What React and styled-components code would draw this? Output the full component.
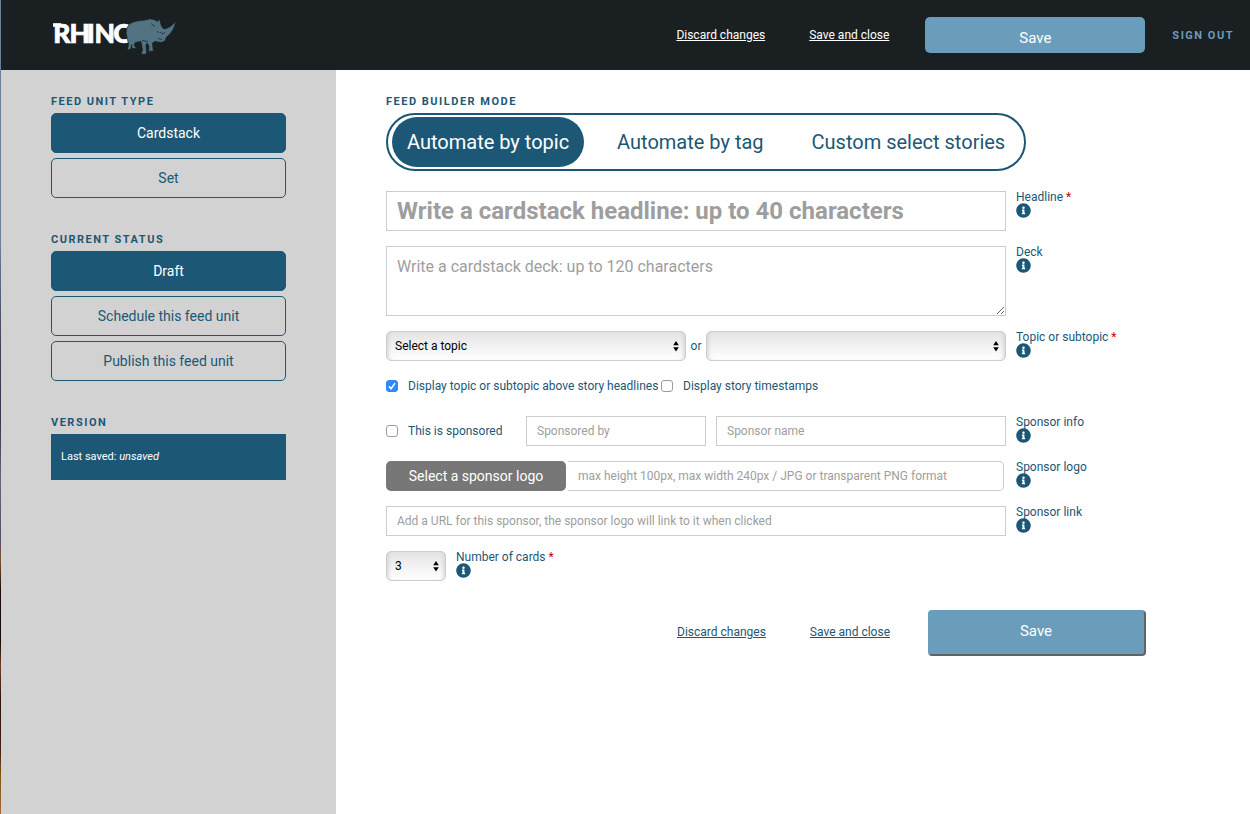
import React from 'react';
import styled, { createGlobalStyle, css } from 'styled-components';
import { FaInfoCircle } from 'react-icons/fa';

const blue = '#1c5775';
const sky = '#6a9dbc';

const GlobalStyle = createGlobalStyle`
  *, *::before, *::after { box-sizing: border-box; }
  body { margin: 0; background: #fff; color: ${blue}; font: 12px/15px Roboto, sans-serif; }
  button, input, select, textarea { font-family: inherit; margin: 0; }
`;

const Page = styled.div`
  display: flex;
  flex-direction: column;
  height: 814px;
  border-left: 1px solid;
  border-image: linear-gradient(
    #6d8299 0, #6d8299 240px, #56657f 290px, #3f4257 350px, #34374e 420px, #6a6578 480px,
    #55506a 535px, #7a5230 560px, #1d0d08 590px, #140805 640px, #713d27 665px, #2b120c 700px,
    #45211a 750px, #7d5a10 775px, #96602f 800px, #a8663c 814px) 1;
`;

const Header = styled.header`
  display: flex;
  align-items: center;
  flex: none;
  height: 70px;
  padding: 0 16px 0 50px;
  background: #1a1f22;
`;

const Logo = styled.svg`
  display: block;
  width: 130px;
  height: 50px;
  margin-right: auto;
`;

const ActionLink = styled.a`
  color: ${p => (p.$light ? '#fff' : blue)};
  text-decoration: underline;
  font-size: 12px;
  line-height: 15px;
  white-space: nowrap;
  margin-right: ${p => p.$gap}px;
`;

const SaveButton = styled.button`
  background: ${sky};
  color: #fff;
  font-size: 15px;
  border-radius: 5px;
  ${p => p.$raised
    ? css`width: 218px; height: 46px; border: 2px solid; border-color: ${sky} #5f6468 #5f6468 ${sky}; border-radius: 4px; padding: 0 2px 4px 0;`
    : css`width: 220px; height: 36px; border: 0; padding: 5px 0 0; `}
`;

const SignOut = styled.a`
  margin-left: 27px;
  color: ${sky};
  font-size: 11px;
  font-weight: 700;
  letter-spacing: 1.5px;
  white-space: nowrap;
`;

const Body = styled.div`
  display: flex;
  flex: 1;
`;

const Sidebar = styled.aside`
  width: 335px;
  padding: 24px 50px 0;
  background: #d2d2d2;
`;

const Group = styled.section`
  margin-bottom: 34px;
`;

const Heading = styled.h2`
  margin: 0 0 4px;
  font-size: 11px;
  line-height: 15px;
  font-weight: 700;
  letter-spacing: 1.5px;
`;

const Choice = styled.button`
  display: block;
  width: 235px;
  height: 40px;
  margin-bottom: 5px;
  padding: 0;
  border: 1px solid ${blue};
  border-radius: 5px;
  background: ${p => (p.$active ? blue : 'transparent')};
  color: ${p => (p.$active ? '#fff' : blue)};
  font-size: 14px;
`;

const Version = styled.div`
  height: 46px;
  padding: 15px 10px;
  background: ${blue};
  color: #fff;
  font-size: 11px;
`;

const Main = styled.main`
  width: 914px;
  padding: 24px 50px 0;
`;

const Modes = styled.div`
  display: flex;
  width: 640px;
  height: 58px;
  margin-bottom: 20px;
  padding: 2px 4px;
  border: 2px solid ${blue};
  border-radius: 29px;
`;

const Mode = styled.button`
  height: 50px;
  padding: 0 15px;
  margin-right: ${p => p.$gap || 0}px;
  border: 0;
  border-radius: 25px;
  background: ${p => (p.$active ? blue : 'transparent')};
  color: ${p => (p.$active ? '#fff' : blue)};
  font-size: 20px;
  white-space: nowrap;
`;

const Row = styled.div`
  display: flex;
  margin-bottom: 15px;
`;

const Fields = styled.div`
  display: flex;
  flex: none;
  width: ${p => p.$width || 620}px;
  margin-right: 10px;
`;

const fieldStyle = css`
  border: 1px solid #ccc;
  border-radius: 0;
  background: #fff;
  outline: none;
  &::placeholder { color: #9e9e9e; opacity: 1; }
`;

const TextField = styled.input`
  ${fieldStyle}
  width: ${p => p.$width || 620}px;
  height: 30px;
  padding: 0 10px;
  font-size: 12px;
  margin-right: ${p => p.$gap || 0}px;
`;

const HeadlineField = styled(TextField)`
  height: 40px;
  font-size: 24px;
  font-weight: 700;
`;

const DeckField = styled.textarea`
  ${fieldStyle}
  display: block;
  width: 620px;
  height: 70px;
  padding: 10px;
  font-size: 16px;
  line-height: 19px;
  resize: both;
`;

const LogoField = styled(TextField)`
  margin-left: 2px;
  border-left: 0;
  border-radius: 0 5px 5px 0;
`;

const LogoButton = styled.button`
  width: 180px;
  height: 30px;
  padding: 0;
  border: 0;
  border-radius: 5px;
  background: #777;
  color: #fff;
  font-size: 14px;
`;

const Hint = styled.div`
  font-size: 12px;
  line-height: 12px;
  white-space: nowrap;
  svg { display: block; width: 15px; height: 15px; }
`;

const Star = styled.span`
  color: #c00;
`;

const SelectBox = styled.div`
  position: relative;
  width: ${p => p.$width}px;
  height: 30px;
  select {
    appearance: none;
    display: block;
    width: 100%;
    height: 30px;
    padding: 0 8px;
    border: 1px solid #ccc;
    border-radius: 5px;
    background: linear-gradient(#e4e4e4, #fff);
    box-shadow: inset 4px 0 4px -3px #d0d0d0, inset -4px 0 4px -3px #d0d0d0;
    color: #000;
    font-size: 12px;
  }
  svg { position: absolute; right: 7px; top: 10px; pointer-events: none; }
`;

const Or = styled.span`
  width: 20px;
  line-height: 30px;
  text-align: center;
`;

const Checks = styled.div`
  display: flex;
  align-items: center;
  height: 20px;
  margin-bottom: 20px;
`;

const Check = styled.label`
  display: flex;
  align-items: center;
  flex: none;
  width: ${p => p.$width}px;
  white-space: nowrap;
`;

const Box = styled.span`
  display: flex;
  align-items: center;
  justify-content: center;
  width: 12px;
  height: 12px;
  margin-right: 10px;
  border: 1px solid ${p => (p.$checked ? '#2e89fc' : '#9b9b9b')};
  border-radius: 3px;
  background: ${p => (p.$checked ? '#2e89fc' : '#fff')};
`;

const Footer = styled.div`
  display: flex;
  align-items: center;
  justify-content: flex-end;
  width: 760px;
  margin-top: 29px;
`;

const FooterLinks = styled.div`
  display: flex;
  padding-bottom: 2px;
`;

const Arrows = () => (
  <svg width="6" height="11" viewBox="0 0 6 11">
    <path d="M3 0 5.800 4.200H.2ZM3 10.500 .2 6.300H5.800Z" fill="#000" />
  </svg>
);

const Select = ({ width, value }) => (
  <SelectBox $width={width}>
    <select defaultValue={value}><option>{value}</option></select>
    <Arrows />
  </SelectBox>
);

const Checkbox = ({ checked, width, children }) => (
  <Check $width={width}>
    <Box $checked={checked}>
      {checked && (
        <svg width="10" height="10" viewBox="0 0 10 10">
          <path d="M2 5.4 4.1 7.7 8 2.1" fill="none" stroke="#fff" strokeWidth="1.6" />
        </svg>
      )}
    </Box>
    <span>{children}</span>
  </Check>
);

const Label = ({ required, children }) => (
  <Hint>
    {children}{required && <Star> *</Star>}
    <FaInfoCircle />
  </Hint>
);

const RhinoLogo = () => (
  <Logo viewBox="51 10 130 50">
    <text x="53.3 69.6 86.700 94.400 113.300" y="42.5" fontFamily="Lato, sans-serif" fontWeight="900" fontSize="26.500" fill="#fff" stroke="#fff" strokeWidth="0.7">RHINO</text>
    <path d="M53 23.200h8v3.600h-8z" fill="#fff" />
    <g fill="#527482" stroke="#1a1f22" strokeWidth="0.7" strokeLinejoin="round">
      <path d="M127 37C125 31 127 25 132 22.500C138 20 144 21 149 19C153 18.500 155 20 157.500 21.500L159 18.500 160.500 22.500C161 26 162.500 28 164 29C169 28 173 25 175.500 21.500C175 27 172 33 166.500 37L165 41 161 42.500 155 41.500 152.500 43 153 48.500 153.500 51 148.500 51.500 149 46 147 43 146 45 146.500 52.500 145.500 54.500 141 54 142.500 50 141 41.500 135.500 42.500 134 45 136.500 48.500 132 48.500 131.500 44.500 131 48 130 50 127.500 49.500 128.500 44Z" />
      <path d="M151 23.500 155 26.500M157 31 159 33M158 38.500 162 39.500M160 32 163 34 165 32M142 40.500 148 41.500" fill="none" />
    </g>
  </Logo>
);

export default function App() {
  return (
    <Page>
      <GlobalStyle />
      <Header>
        <RhinoLogo />
        <ActionLink $light $gap={44}>Discard changes</ActionLink>
        <ActionLink $light $gap={36}>Save and close</ActionLink>
        <SaveButton>Save</SaveButton>
        <SignOut>SIGN OUT</SignOut>
      </Header>
      <Body>
        <Sidebar>
          <Group>
            <Heading>FEED UNIT TYPE</Heading>
            <Choice $active>Cardstack</Choice>
            <Choice>Set</Choice>
          </Group>
          <Group>
            <Heading>CURRENT STATUS</Heading>
            <Choice $active>Draft</Choice>
            <Choice>Schedule this feed unit</Choice>
            <Choice>Publish this feed unit</Choice>
          </Group>
          <Group>
            <Heading>VERSION</Heading>
            <Version>Last saved: <em>unsaved</em></Version>
          </Group>
        </Sidebar>
        <Main>
          <Heading>FEED BUILDER MODE</Heading>
          <Modes>
            <Mode $active $gap={18}>Automate by topic</Mode>
            <Mode $gap={18}>Automate by tag</Mode>
            <Mode>Custom select stories</Mode>
          </Modes>
          <Row>
            <Fields><HeadlineField placeholder="Write a cardstack headline: up to 40 characters" /></Fields>
            <Label required>Headline</Label>
          </Row>
          <Row>
            <Fields><DeckField placeholder="Write a cardstack deck: up to 120 characters" /></Fields>
            <Label>Deck</Label>
          </Row>
          <Row>
            <Fields>
              <Select width={300} value="Select a topic" />
              <Or>or</Or>
              <Select width={300} value="" />
            </Fields>
            <Label required>Topic or subtopic</Label>
          </Row>
          <Checks>
            <Checkbox checked width={275}>Display topic or subtopic above story headlines</Checkbox>
            <Checkbox>Display story timestamps</Checkbox>
          </Checks>
          <Row>
            <Fields>
              <Checkbox width={140}>This is sponsored</Checkbox>
              <TextField $width={180} $gap={10} placeholder="Sponsored by" />
              <TextField $width={290} placeholder="Sponsor name" />
            </Fields>
            <Label>Sponsor info</Label>
          </Row>
          <Row>
            <Fields>
              <LogoButton>Select a sponsor logo</LogoButton>
              <LogoField $width={436} placeholder="max height 100px, max width 240px / JPG or transparent PNG format" />
            </Fields>
            <Label>Sponsor logo</Label>
          </Row>
          <Row>
            <Fields><TextField placeholder="Add a URL for this sponsor, the sponsor logo will link to it when clicked" /></Fields>
            <Label>Sponsor link</Label>
          </Row>
          <Row>
            <Fields $width={60}><Select width={60} value="3" /></Fields>
            <Label required>Number of cards</Label>
          </Row>
          <Footer>
            <FooterLinks>
              <ActionLink $gap={44}>Discard changes</ActionLink>
              <ActionLink $gap={38}>Save and close</ActionLink>
            </FooterLinks>
            <SaveButton $raised>Save</SaveButton>
          </Footer>
        </Main>
      </Body>
    </Page>
  );
}
